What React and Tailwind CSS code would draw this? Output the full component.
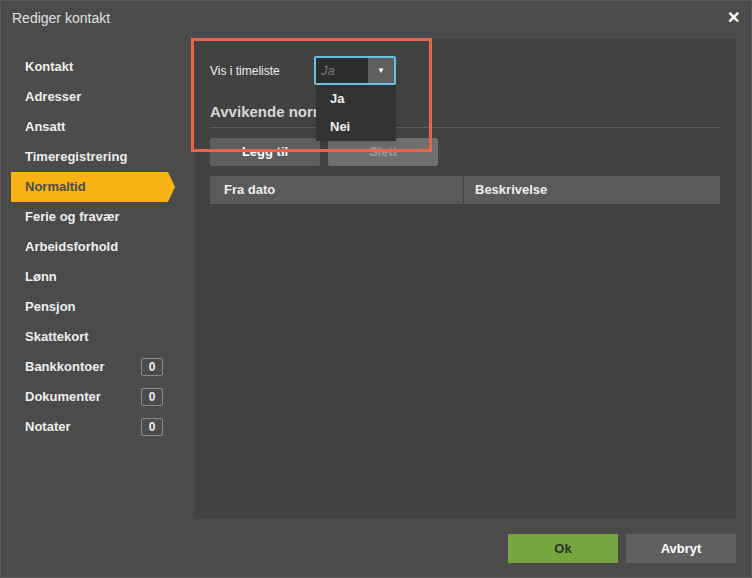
export default function App() {
  const items = ["Kontakt","Adresser","Ansatt","Timeregistrering","Normaltid","Ferie og fravær","Arbeidsforhold","Lønn","Pensjon","Skattekort","Bankkontoer","Dokumenter","Notater"];
  const badges = { Bankkontoer: 1, Dokumenter: 1, Notater: 1 };
  return (
    <div className="w-[752px] h-[578px] bg-[#4b4b4b] flex flex-col text-[13px] text-[#eeeeee] border border-[#5a5a5a]" style={{ fontFamily: '"Liberation Sans", Arial, sans-serif' }}>
      <div className="h-[34px] flex items-center justify-between px-[11px] text-[14px] text-[#e0e0e0]">
        <span>Rediger kontakt</span>
        <span className="text-white font-bold text-[16px]">✕</span>
      </div>
      <div className="flex flex-1 pt-[4px]">
        <div className="w-[193px] pt-[13px] flex flex-col">
          {items.map((it) => it === "Normaltid" ? (
            <div key={it} className="relative ml-[10px] w-[157px] h-[30px] bg-[#f9b213] flex items-center pl-[14px] font-bold text-[#4b4b4b]">
              {it}
              <div className="absolute right-[-7px] top-0 w-0 h-0 border-y-[15px] border-y-transparent border-l-[7px] border-l-[#f9b213]" />
            </div>
          ) : (
            <div key={it} className="h-[30px] flex items-center pl-[24px] pr-[31px] justify-between font-bold">
              <span>{it}</span>
              {badges[it] && <span className="w-[22px] h-[18px] border border-[#8a8a8a] rounded-[2px] flex items-center justify-center text-[12px]">0</span>}
            </div>
          ))}
        </div>
        <div className="flex-1 flex flex-col pr-[15px]">
          <div className="h-[480px] bg-[#424242] relative px-[16px] pt-[17px]">
            <div className="flex items-center h-[29px]">
              <span className="w-[104px] text-[12px]">Vis i timeliste</span>
              <div className="w-[82px] h-[29px] border-2 border-[#69c0dc] rounded-[2px] flex">
                <span className="flex-1 bg-[#2d2d2d] text-[#7a7a7a] italic pl-[5px] flex items-center text-[13px]">Ja</span>
                <span className="w-[26px] bg-[#5f5f5f] flex items-center justify-center text-[8px] text-white">▼</span>
              </div>
            </div>
            <div className="mt-[15px] text-[15px] font-bold text-[#d8d8d8] h-[23px] flex items-end">Avvikende normaltid</div>
            <div className="h-px bg-[#5c5c5c] mt-[4px]" />
            <div className="flex gap-[8px] mt-[10px]">
              <div className="w-[110px] h-[28px] bg-[#5e5e5e] rounded-[2px] flex items-center justify-center font-bold text-white">Legg til</div>
              <div className="w-[110px] h-[28px] bg-[#6f6f6f] rounded-[2px] flex items-center justify-center font-bold text-[#9a9a9a]">Slett</div>
            </div>
            <div className="flex mt-[10px] h-[28px] bg-[#5a5a5a] font-bold">
              <div className="w-[254px] border-r border-[#424242] flex items-center pl-[14px]">Fra dato</div>
              <div className="flex-1 flex items-center pl-[11px]">Beskrivelse</div>
            </div>
            <div className="absolute left-[122px] top-[46px] w-[80px] h-[56px] bg-[#333333] shadow-md flex flex-col font-bold">
              <div className="h-[28px] flex items-center pl-[14px]">Ja</div>
              <div className="h-[28px] flex items-center pl-[14px]">Nei</div>
            </div>
            <div className="absolute left-[-3px] top-[-1px] w-[241px] h-[114px] border-[3px] border-[#e8644a]" />
          </div>
          <div className="flex justify-end gap-[8px] mt-[15px]">
            <div className="w-[110px] h-[29px] bg-[#76a53f] flex items-center justify-center font-bold text-[#2e2e2e]">Ok</div>
            <div className="w-[110px] h-[29px] bg-[#606060] flex items-center justify-center font-bold text-white">Avbryt</div>
          </div>
        </div>
      </div>
    </div>
  );
}
